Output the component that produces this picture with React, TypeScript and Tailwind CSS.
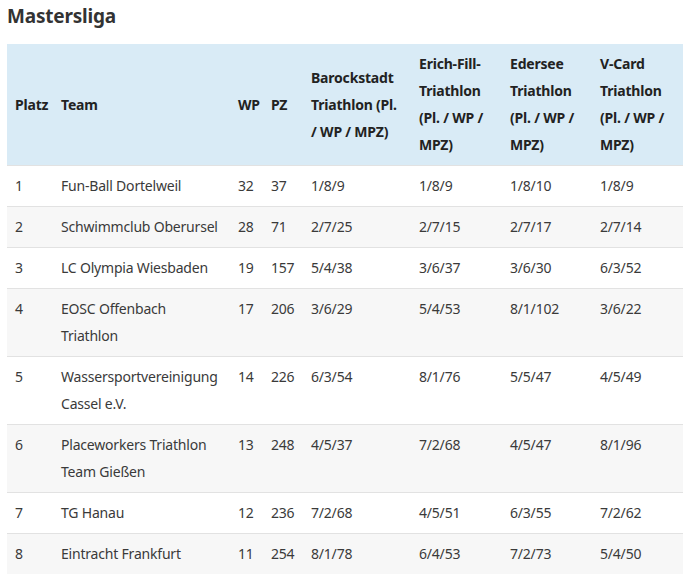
const rows: [string, string, string, string, string, string, string, string][] = [
  ["1", "Fun-Ball Dortelweil", "32", "37", "1/8/9", "1/8/9", "1/8/10", "1/8/9"],
  ["2", "Schwimmclub Oberursel", "28", "71", "2/7/25", "2/7/15", "2/7/17", "2/7/14"],
  ["3", "LC Olympia Wiesbaden", "19", "157", "5/4/38", "3/6/37", "3/6/30", "6/3/52"],
  ["4", "EOSC Offenbach Triathlon", "17", "206", "3/6/29", "5/4/53", "8/1/102", "3/6/22"],
  ["5", "Wassersportvereinigung Cassel e.V.", "14", "226", "6/3/54", "8/1/76", "5/5/47", "4/5/49"],
  ["6", "Placeworkers Triathlon Team Gießen", "13", "248", "4/5/37", "7/2/68", "4/5/47", "8/1/96"],
  ["7", "TG Hanau", "12", "236", "7/2/68", "4/5/51", "6/3/55", "7/2/62"],
  ["8", "Eintracht Frankfurt", "11", "254", "8/1/78", "6/4/53", "7/2/73", "5/4/50"],
];

const headers = [
  "Platz",
  "Team",
  "WP",
  "PZ",
  "Barockstadt Triathlon (Pl. / WP / MPZ)",
  "Erich-Fill-Triathlon (Pl. / WP / MPZ)",
  "Edersee Triathlon (Pl. / WP / MPZ)",
  "V-Card Triathlon (Pl. / WP / MPZ)",
];

const widths = ["w-[46px]", "w-[177px]", "w-[33px]", "w-[40px]", "w-[108px]", "w-[91px]", "w-[90px]", "w-[91px]"];

export default function App() {
  return (
    <div className="w-[690px] h-[581px] bg-white px-[7px] pt-[3px] font-['Noto_Sans',sans-serif]">
      <h2 className="text-[19px] font-bold text-[#333] leading-[26px] tracking-[-0.2px]">Mastersliga</h2>
      <table className="mt-[15px] w-[676px] table-fixed border-collapse text-[14px] leading-[27px]">
        <colgroup>
          {widths.map((w, i) => (
            <col key={i} className={w} />
          ))}
        </colgroup>
        <thead>
          <tr className="bg-[#d9ebf6]">
            {headers.map((h, i) => (
              <th
                key={i}
                className="h-[121px] px-[8px] py-[6px] text-left align-middle font-bold text-[#222] tracking-[-0.2px]"
              >
                {h}
              </th>
            ))}
          </tr>
        </thead>
        <tbody>
          {rows.map((r, ri) => (
            <tr
              key={ri}
              className={`border-t border-[#e2e2e2] ${ri % 2 === 1 ? "bg-[#f7f7f7]" : "bg-white"}`}
            >
              {r.map((c, ci) => (
                <td key={ci} className="px-[8px] pt-[6px] pb-[7px] align-top text-[#3a3a3a] tracking-[-0.2px]">
                  {c}
                </td>
              ))}
            </tr>
          ))}
        </tbody>
      </table>
    </div>
  );
}
